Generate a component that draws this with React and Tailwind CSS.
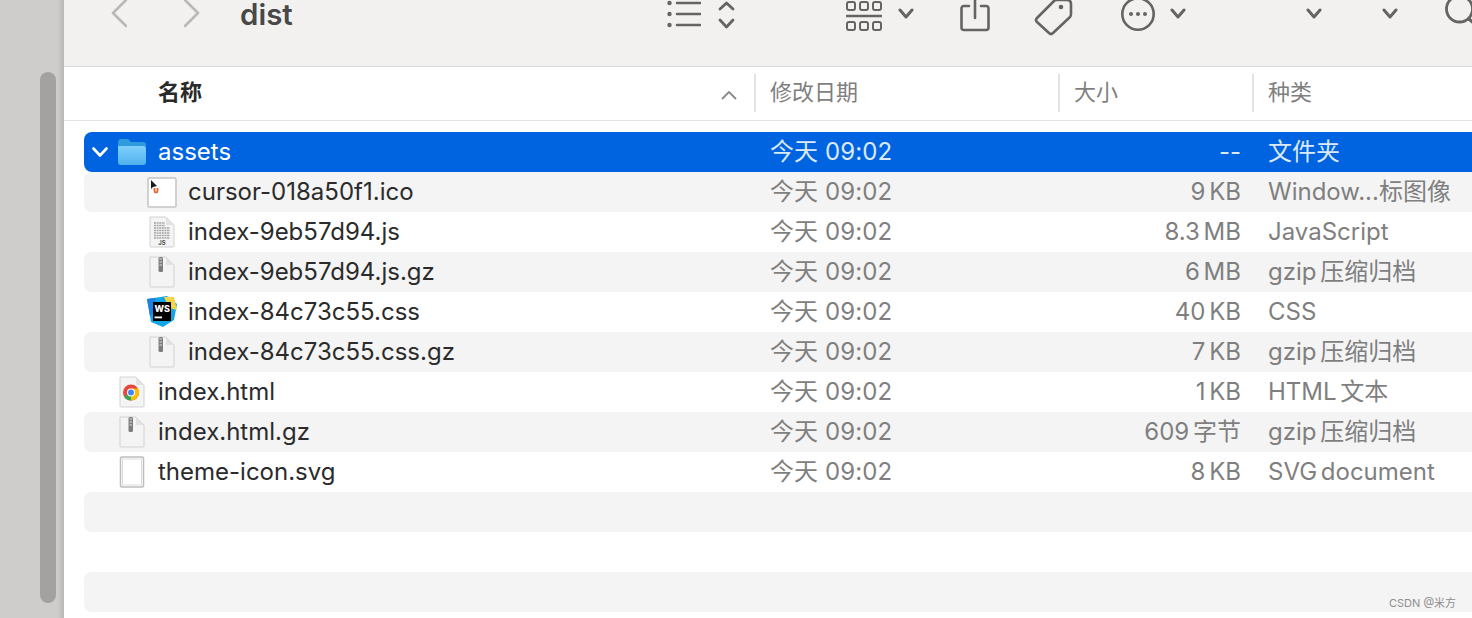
import React from 'react';

const FONT = "font-['Inter','Noto_Sans_CJK_SC',sans-serif]";

const Chevron = ({ width = 16, className = '' }) => (
  <svg width={width} height="36" viewBox={`0 -4 ${width} 36`} fill="none" className={`shrink-0 ${className}`}>
    <path d={`M2 10 L${width / 2} 17 L${width - 2} 10`} stroke="#666462" strokeWidth="3" strokeLinecap="round" strokeLinejoin="round" />
  </svg>
);

const Toolbar = () => (
  <div className="h-[67px] bg-[#f2f1f0] border-b border-[#dcdbda] overflow-hidden">
    <div className="flex h-9 -mt-1 items-start">
      <svg width="16" height="36" viewBox="0 -4 16 36" fill="none" className="ml-[47px] shrink-0">
        <path d="M15 0 L2 13 L15 26" stroke="#b9b8b7" strokeWidth="2.6" strokeLinecap="round" strokeLinejoin="round" />
      </svg>
      <svg width="16" height="36" viewBox="0 -4 16 36" fill="none" className="ml-[57px] shrink-0">
        <path d="M1 0 L14 13 L1 26" stroke="#b9b8b7" strokeWidth="2.6" strokeLinecap="round" strokeLinejoin="round" />
      </svg>
      <span className="ml-[40px] mt-1 w-[52px] text-[29.500px] leading-[28px] font-semibold text-[#484848] shrink-0">dist</span>

      <svg width="34" height="36" viewBox="0 -4 34 36" fill="none" className="ml-[375px] shrink-0">
        <g fill="#666462">
          <circle cx="2.5" cy="3" r="2.2" />
          <circle cx="2.5" cy="14" r="2.2" />
          <circle cx="2.5" cy="25" r="2.2" />
        </g>
        <path d="M10 3H33M10 14H33M10 25H33" stroke="#666462" strokeWidth="2.6" strokeLinecap="round" />
      </svg>
      <svg width="17" height="36" viewBox="0 -4 17 36" fill="none" className="ml-[17px] shrink-0">
        <path d="M2 9 L8.5 3 L15 9M2 20 L8.5 27 L15 20" stroke="#666462" strokeWidth="2.8" strokeLinecap="round" strokeLinejoin="round" />
      </svg>

      <svg width="36" height="36" viewBox="0 -4 36 36" fill="none" className="ml-[111px] shrink-0">
        <g stroke="#666462" strokeWidth="2">
          <rect x="1" y="2" width="8" height="8" rx="2" />
          <rect x="14" y="2" width="8" height="8" rx="2" />
          <rect x="27" y="2" width="8" height="8" rx="2" />
          <rect x="1" y="22" width="8" height="8" rx="2" />
          <rect x="14" y="22" width="8" height="8" rx="2" />
          <rect x="27" y="22" width="8" height="8" rx="2" />
        </g>
        <path d="M1 16H35" stroke="#666462" strokeWidth="2.6" strokeLinecap="round" />
      </svg>
      <Chevron className="ml-[16px]" />

      <svg width="30" height="36" viewBox="0 -4 30 36" fill="none" className="ml-[46px] shrink-0">
        <path d="M9 6H4 Q1.5 6 1.5 8.5V27.5 Q1.5 30 4 30H26 Q28.500 30 28.500 27.500V8.500 Q28.500 6 26 6H21" stroke="#666462" strokeWidth="2.6" strokeLinecap="round" />
        <path d="M15 -3V18" stroke="#666462" strokeWidth="2.6" strokeLinecap="round" />
      </svg>

      <svg width="38" height="36" viewBox="0 -4 38 36" fill="none" className="ml-[44px] shrink-0 overflow-visible">
        <path d="M3 18 L20 1 Q21 0 23 0 H33 Q37 0 37 4 V14 Q37 16 36 17 L19 33 Q17 35 15 33 L3 22 Q1 20 3 18Z" stroke="#666462" strokeWidth="2.600" strokeLinejoin="round" />
        <circle cx="27" cy="7" r="2.300" fill="#666462" />
      </svg>

      <svg width="34" height="36" viewBox="0 -4 34 36" fill="none" className="ml-[49px] shrink-0">
        <circle cx="17" cy="14" r="15.700" stroke="#666462" strokeWidth="2.600" />
        <g fill="#666462">
          <circle cx="10" cy="14" r="2" />
          <circle cx="17" cy="14" r="2" />
          <circle cx="24" cy="14" r="2" />
        </g>
      </svg>
      <Chevron className="ml-[15px]" />
      <Chevron className="ml-[120px]" />
      <Chevron className="ml-[60px]" />

      <svg width="27" height="36" viewBox="0 -4 27 36" fill="none" className="ml-[47px] shrink-0">
        <circle cx="14.500" cy="9" r="13" stroke="#666462" strokeWidth="2.800" />
        <path d="M24 19 L34 28" stroke="#666462" strokeWidth="3.200" strokeLinecap="round" />
      </svg>
    </div>
  </div>
);

const HeaderCell = ({ children, className = '' }) => (
  <div className={`text-[22px] leading-[30px] text-[#7f7f7f] ${className}`}>{children}</div>
);

const Header = () => (
  <div className="h-[54px] flex items-start border-b border-[#e3e3e3] bg-white">
    <div className="w-[690px] shrink-0 flex justify-between items-center h-[51px] pl-[94px] pr-[17px]">
      <span className="text-[22px] font-bold text-[#2a2a2a]">名称</span>
      <svg width="16" height="10" viewBox="0 0 16 10" fill="none" className="mt-1">
        <path d="M1.500 8.500 L8 2 L14.500 8.500" stroke="#8b8b8b" strokeWidth="1.800" strokeLinecap="round" strokeLinejoin="round" />
      </svg>
    </div>
    <div className="mt-[7px] h-[38px] w-[2px] bg-[#e3e3e3] shrink-0" />
    <HeaderCell className="w-[302px] shrink-0 pl-[14px] mt-[10px]">修改日期</HeaderCell>
    <div className="mt-[7px] h-[38px] w-[2px] bg-[#e3e3e3] shrink-0" />
    <HeaderCell className="w-[192px] shrink-0 pl-[14px] mt-[10px]">大小</HeaderCell>
    <div className="mt-[7px] h-[38px] w-[2px] bg-[#e3e3e3] shrink-0" />
    <HeaderCell className="pl-[14px] mt-[10px]">种类</HeaderCell>
  </div>
);

const FolderIcon = () => (
  <svg width="30" height="28" viewBox="0 0 30 28" className="shrink-0">
    <defs>
      <linearGradient id="fld" x1="0" y1="0" x2="0" y2="1">
        <stop offset="0" stopColor="#7fd0fb" />
        <stop offset="1" stopColor="#4fb1ee" />
      </linearGradient>
    </defs>
    <path d="M1 5 Q1 1 4 1 H10 Q12 1 13 3 L14 4 H26 Q29 4 29 7 V10 H1Z" fill="#2f9ade" />
    <path d="M1 8 H26 Q29 8 29 11 V24 Q29 27 26 27 H4 Q1 27 1 24Z" fill="url(#fld)" />
  </svg>
);

const DocShape = ({ children }) => (
  <svg width="28" height="34" viewBox="0 0 28 34" className="shrink-0">
    <path d="M2 2 H18 L26 10 V31 Q26 32 25 32 H3 Q2 32 2 31Z" fill="#f4f4f4" stroke="#d2d2d2" strokeWidth="1" />
    <path d="M18 2 V10 H26Z" fill="#e2e2e2" />
    {children}
  </svg>
);

const ZipIcon = () => (
  <DocShape>
    <rect x="10.500" y="2" width="4.500" height="15" rx="1.500" fill="#7d7d7d" />
    <path d="M11.500 4H14M11.500 7H14M11.500 10H14" stroke="#dedede" strokeWidth="1" />
  </DocShape>
);

const JsIcon = () => (
  <DocShape>
    <path d="M6 8H17M6 10.500H17M6 13H22M6 15.500H22M6 18H22M6 20.500H22M6 23H22" stroke="#a7a7a7" strokeWidth="1.400" strokeDasharray="2 0.600" />
    <text x="14" y="30" textAnchor="middle" fontSize="6" fontWeight="700" fill="#555" fontFamily="Inter, sans-serif">JS</text>
  </DocShape>
);

const ChromeIcon = () => (
  <DocShape>
    <circle cx="13" cy="17.500" r="8" fill="#e8453c" />
    <path d="M13 17.500 L6.100 21.500 A8 8 0 0 0 13 25.500 L17 19Z" fill="#34a853" />
    <path d="M13 17.500 L13 25.500 A8 8 0 0 0 20 13.500 L13 13.500Z" fill="#fbbc05" />
    <circle cx="13" cy="17.500" r="4" fill="#fff" />
    <circle cx="13" cy="17.500" r="3" fill="#4285f4" />
  </DocShape>
);

const BlankIcon = () => (
  <svg width="26" height="32" viewBox="0 0 26 32" className="shrink-0">
    <rect x="1.500" y="1" width="23" height="30" rx="1" fill="#fff" stroke="#bdbdbd" strokeWidth="1.500" />
    <rect x="3.500" y="3" width="19" height="26" fill="#fff" stroke="#dddddd" strokeWidth="1" />
  </svg>
);

const CursorFileIcon = () => (
  <svg width="30" height="31" viewBox="0 0 30 31" className="shrink-0">
    <rect x="1" y="1" width="28" height="29" rx="1" fill="#fff" stroke="#c4c4c4" strokeWidth="1.500" />
    <path d="M4 3 L4 12 L6 10 L10 9Z" fill="#1b1b1b" />
    <path d="M7.500 11 V14 Q7.500 15.500 9 15.500 Q10.500 15.500 10.500 14 V11" stroke="#e8602c" strokeWidth="1.800" fill="none" />
  </svg>
);

const WebStormIcon = () => (
  <svg width="30" height="32" viewBox="0 0 30 32" className="shrink-0">
    <path d="M0 3 L20 0 L30 8 L27 24 L16 31 L4 26Z" fill="#12a5e8" />
    <path d="M17 1 L27 1 L30 14 L22 12Z" fill="#f2d54a" />
    <path d="M0 3 L8 2 L10 14 L3 20Z" fill="#1f7fe0" />
    <rect x="6" y="6" width="18" height="19" fill="#000" />
    <text x="7.500" y="15.500" fontSize="9" fontWeight="800" fill="#fff" fontFamily="Inter, sans-serif">WS</text>
    <rect x="7.500" y="20.500" width="7.500" height="1.800" fill="#fff" />
  </svg>
);

const rows = [
  { name: 'assets', size: '--', kind: '文件夹', indent: 0, selected: true },
  { name: 'cursor-018a50f1.ico', size: '9 KB', kind: 'Window...标图像', icon: <CursorFileIcon />, indent: 1 },
  { name: 'index-9eb57d94.js', size: '8.3 MB', kind: 'JavaScript', icon: <JsIcon />, indent: 1 },
  { name: 'index-9eb57d94.js.gz', size: '6 MB', kind: 'gzip 压缩归档', icon: <ZipIcon />, indent: 1 },
  { name: 'index-84c73c55.css', size: '40 KB', kind: 'CSS', icon: <WebStormIcon />, indent: 1 },
  { name: 'index-84c73c55.css.gz', size: '7 KB', kind: 'gzip 压缩归档', icon: <ZipIcon />, indent: 1 },
  { name: 'index.html', size: '1 KB', kind: 'HTML 文本', icon: <ChromeIcon />, indent: 0 },
  { name: 'index.html.gz', size: '609 字节', kind: 'gzip 压缩归档', icon: <ZipIcon />, indent: 0 },
  { name: 'theme-icon.svg', size: '8 KB', kind: 'SVG document', icon: <BlankIcon />, indent: 0 },
  {},
  {},
  {},
];

const Row = ({ row, index }) => {
  const striped = index % 2 === 1;
  let bg = striped ? 'bg-[#f4f4f4]' : 'bg-white';
  if (row.selected) bg = 'bg-[#0064e1]';
  const main = row.selected ? 'text-white' : 'text-[#2b2b2b]';
  const sub = row.selected ? 'text-[#dce9fb]' : 'text-[#7f7f7f]';

  return (
    <div className={`h-10 flex items-center rounded-l-lg text-[24px] ${bg}`}>
      {row.name && (
        <>
          <div className="w-[686px] shrink-0 flex items-center">
            {row.selected ? (
              <>
                <svg width="16" height="12" viewBox="0 0 16 12" fill="none" className="ml-[8px] shrink-0">
                  <path d="M1.500 2.500 L8 9.500 L14.500 2.500" stroke="#fff" strokeWidth="2.600" strokeLinecap="round" strokeLinejoin="round" />
                </svg>
                <div className="ml-[9px] w-[30px] shrink-0 flex justify-center"><FolderIcon /></div>
              </>
            ) : (
              <div className={`shrink-0 flex justify-center w-[30px] ${row.indent ? 'ml-[63px]' : 'ml-[33px]'}`}>{row.icon}</div>
            )}
            <span className={`ml-[11px] whitespace-nowrap ${main}`}>{row.name}</span>
          </div>
          <div className={`w-[300px] shrink-0 whitespace-nowrap tracking-[0.1px] ${sub}`}>今天 09:02</div>
          <div className={`w-[171px] shrink-0 text-right whitespace-nowrap [word-spacing:-3px] ${sub}`}>{row.size}</div>
          <div className={`ml-[27px] whitespace-nowrap [word-spacing:-3px] ${sub}`}>{row.kind}</div>
        </>
      )}
    </div>
  );
};

export default function App() {
  return (
    <div className={`relative flex h-[618px] w-[1472px] overflow-hidden bg-white ${FONT}`}>
      <div className="w-16 shrink-0 bg-[#cecdcc] bg-gradient-to-r from-[#cecdcc] from-90% to-[#b9b8b7]">
        <div className="ml-10 mt-[72px] h-[531px] w-4 rounded-full bg-[#a3a2a1]" />
      </div>
      <div className="flex-1 min-w-0">
        <Toolbar />
        <Header />
        <div className="pl-5 pt-[11px]">
          {rows.map((row, i) => (
            <Row key={i} row={row} index={i} />
          ))}
        </div>
      </div>
      <span className="absolute left-[1389px] top-[596px] text-[11px] leading-[14px] text-[#8e8e8e]">CSDN @米方</span>
    </div>
  );
}
